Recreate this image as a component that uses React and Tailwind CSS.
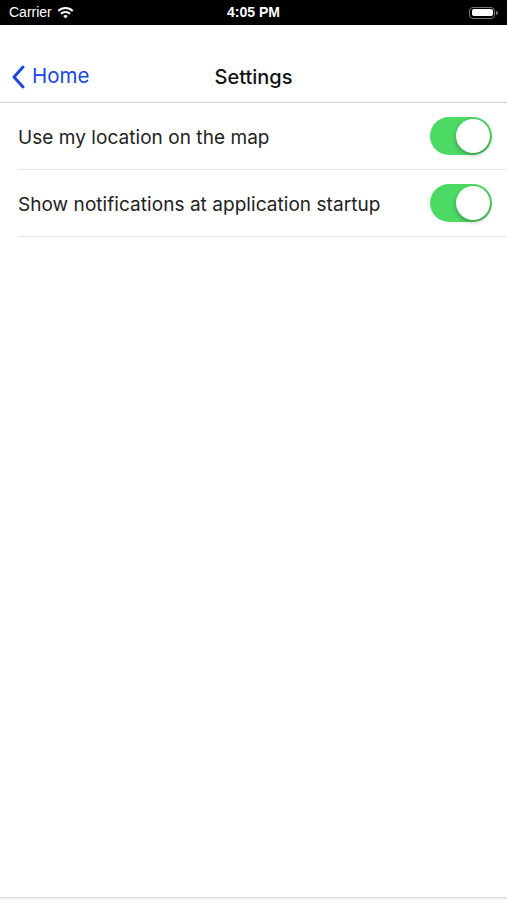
import React from "react";

function Toggle() {
  return (
    <div className="relative w-[62px] h-[38px] rounded-full bg-[#4cd964]">
      <div className="absolute right-[2px] top-[2px] w-[34px] h-[34px] rounded-full bg-white shadow-[0_2px_4px_rgba(0,0,0,0.3)]" />
    </div>
  );
}

export default function App() {
  return (
    <div className="w-[507px] h-[900px] bg-white flex flex-col font-['Inter',sans-serif]">
      <div className="h-[25px] bg-black flex items-center px-[9px] text-white text-[14px] font-['Liberation_Sans',sans-serif] relative">
        <div className="flex items-center gap-[5px]">
          <span>Carrier</span>
          <svg width="17" height="13" viewBox="0 0 17 13">
            <path d="M8.5 12.5 L6.2 10.1 A3.3 3.3 0 0 1 10.8 10.1 Z" fill="white" />
            <path d="M3.9 7.8 A6.6 6.6 0 0 1 13.1 7.8" stroke="white" strokeWidth="2" fill="none" />
            <path d="M1.3 5 A10.4 10.4 0 0 1 15.7 5" stroke="white" strokeWidth="2" fill="none" />
          </svg>
        </div>
        <div className="absolute left-0 right-0 text-center font-bold text-[14px] pointer-events-none">4:05 PM</div>
        <div className="ml-auto flex items-center gap-[1px]">
          <div className="w-[26px] h-[12px] rounded-[4px] border border-[#777] p-[1.5px]">
            <div className="w-full h-full bg-white rounded-[2px]" />
          </div>
          <div className="w-[2px] h-[4px] bg-[#777] rounded-r-sm" />
        </div>
      </div>
      <div className="h-[78px] border-b border-[#cfcfcf] flex items-center relative pt-[26px]">
        <div className="flex items-center pl-[11px] text-[#1a47e5] text-[20.5px] gap-[7px]">
          <svg width="14" height="24" viewBox="0 0 14 24">
            <path d="M12 2 L3 12 L12 22" stroke="#1a47e5" strokeWidth="3" fill="none" strokeLinecap="round" strokeLinejoin="round" />
          </svg>
          <span>Home</span>
        </div>
        <div className="absolute left-0 right-0 top-[26px] bottom-0 flex items-center justify-center text-[20px] font-medium text-[#111] pointer-events-none">Settings</div>
      </div>
      <div className="flex flex-col pl-[18px]">
        <div className="h-[67px] flex items-center justify-between pr-[15px] border-b border-[#e2e2e2]">
          <span className="text-[19px] tracking-[0.05px] text-[#222] pt-[4px]">Use my location on the map</span>
          <Toggle />
        </div>
        <div className="h-[67px] flex items-center justify-between pr-[15px] border-b border-[#e2e2e2]">
          <span className="text-[19px] tracking-[0.05px] text-[#222] pt-[4px]">Show notifications at application startup</span>
          <Toggle />
        </div>
      </div>
      <div className="flex-1" />
      <div className="h-[3px] border-t border-[#dcdcdc] bg-[#f2f2f2]" />
    </div>
  );
}
